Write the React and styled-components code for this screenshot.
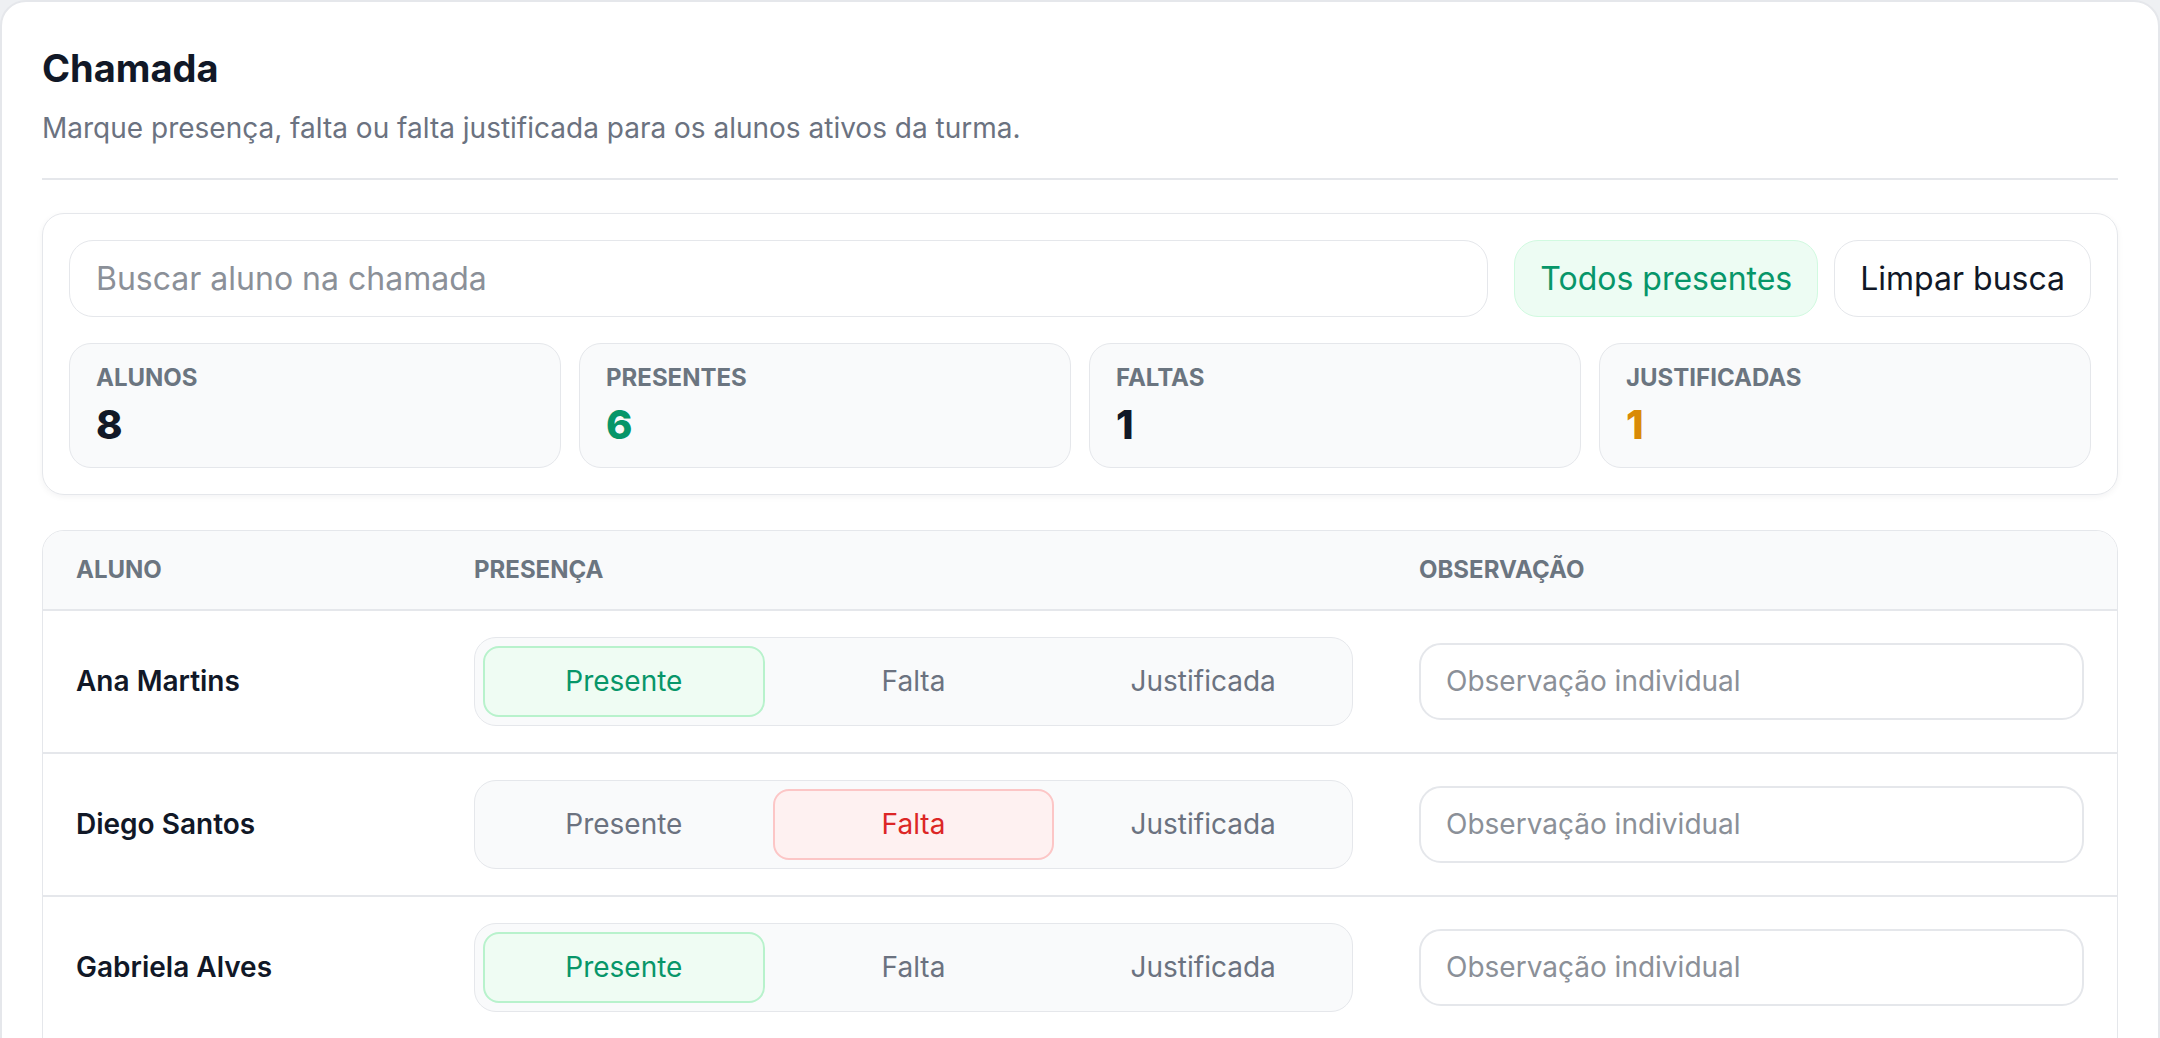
import React, { useState } from 'react'
import styled, { createGlobalStyle } from 'styled-components'

const GlobalStyle = createGlobalStyle`
  * { box-sizing: border-box; }
  body {
    margin: 0;
    background: #eef0f3;
    font-family: Inter, "Noto Sans", sans-serif;
    color: #111827;
  }
  input::placeholder { color: #8b9098; }
`

const Card = styled.section`
  background: #fff;
  border: 2px solid #e5e7eb;
  border-radius: 26px;
  padding: 44px 40px 60px;
`

const Title = styled.h1`
  margin: 0;
  font-size: 38px;
  font-weight: 700;
  line-height: 1.2;
  color: #111827;
`

const Subtitle = styled.p`
  margin: 18px 0 0;
  font-size: 28px;
  line-height: 1.3;
  color: #6b7280;
`

const Divider = styled.hr`
  margin: 32px 0 33px;
  border: 0;
  height: 2px;
  background: #e5e7eb;
`

const Panel = styled.div`
  border: 1px solid #e5e7eb;
  border-radius: 22px;
  padding: 26px;
  display: flex;
  flex-direction: column;
  gap: 26px;
  box-shadow: 0 2px 6px rgba(15, 23, 42, 0.05);
`

const Toolbar = styled.div`
  display: flex;
  align-items: center;
`

const Search = styled.input`
  flex: 1;
  height: 77px;
  border: 1px solid #e5e7eb;
  border-radius: 24px;
  padding: 0 26px;
  font-family: inherit;
  font-size: 32px;
  color: #111827;
  outline: none;
  margin-right: 26px;
`

const ToolButton = styled.button`
  height: 77px;
  padding: 0 25px;
  border-radius: 24px;
  font-family: inherit;
  font-size: 32px;
  cursor: pointer;
  border: 1px solid ${p => (p.$accent ? '#d1fae0' : '#e5e7eb')};
  background: ${p => (p.$accent ? '#edfcf3' : '#fff')};
  color: ${p => (p.$accent ? '#079669' : '#111827')};
  & + & { margin-left: 16px; }
`

const Stats = styled.div`
  display: grid;
  grid-template-columns: repeat(4, 1fr);
  gap: 18px;
`

const Stat = styled.div`
  height: 125px;
  border: 1px solid #e5e7eb;
  border-radius: 22px;
  background: #f9fafb;
  padding: 20px 26px;
  display: flex;
  flex-direction: column;
  gap: 8px;
`

const StatLabel = styled.span`
  font-size: 24px;
  font-weight: 700;
  line-height: 1.2;
  color: #6b7580;
  text-transform: uppercase;
`

const StatValue = styled.span`
  font-size: 40px;
  font-weight: 800;
  line-height: 1.2;
  color: ${p => p.$color || '#111827'};
`

const Table = styled.div`
  margin-top: 35px;
  border: 1px solid #e5e7eb;
  border-radius: 22px;
  overflow: hidden;
`

const Row = styled.div`
  display: grid;
  grid-template-columns: 398px 945px 1fr;
  align-items: center;
  height: ${p => (p.$head ? '80px' : '143px')};
  background: ${p => (p.$head ? '#f9fafb' : '#fff')};
  border-bottom: 2px solid #e5e7eb;
  &:last-child { border-bottom: 0; }
`

const Cell = styled.div`
  padding: 0 33px;
`

const HeadCell = styled(Cell)`
  font-size: 24px;
  font-weight: 700;
  color: #6b7580;
  text-transform: uppercase;
`

const Name = styled(Cell)`
  font-size: 28px;
  font-weight: 600;
  color: #111827;
`

const Segmented = styled.div`
  display: grid;
  grid-template-columns: repeat(3, 1fr);
  gap: 8px;
  height: 89px;
  padding: 8px;
  border: 1px solid #e5e7eb;
  border-radius: 22px;
  background: #f9fafb;
`

const tones = {
  presente: { bg: '#effcf3', border: '#b8f2cc', color: '#079669' },
  falta: { bg: '#fef1f1', border: '#fcc6c6', color: '#dc2626' },
  justificada: { bg: '#fffbeb', border: '#fde68a', color: '#d97706' },
}

const Segment = styled.button`
  border-radius: 16px;
  font-family: inherit;
  font-size: 28px;
  cursor: pointer;
  border: 2px solid ${p => (p.$active ? tones[p.$value].border : 'transparent')};
  background: ${p => (p.$active ? tones[p.$value].bg : 'transparent')};
  color: ${p => (p.$active ? tones[p.$value].color : '#6b7280')};
`

const Note = styled.input`
  width: 100%;
  height: 77px;
  border: 2px solid #e5e7eb;
  border-radius: 22px;
  padding: 0 25px;
  font-family: inherit;
  font-size: 28px;
  color: #111827;
  outline: none;
`

const options = [
  { value: 'presente', label: 'Presente' },
  { value: 'falta', label: 'Falta' },
  { value: 'justificada', label: 'Justificada' },
]

const initialStudents = [
  { id: 1, name: 'Ana Martins', status: 'presente' },
  { id: 2, name: 'Diego Santos', status: 'falta' },
  { id: 3, name: 'Gabriela Alves', status: 'presente' },
  { id: 4, name: 'Helena Costa', status: 'presente' },
  { id: 5, name: 'Lucas Pereira', status: 'justificada' },
  { id: 6, name: 'Marina Rocha', status: 'presente' },
  { id: 7, name: 'Pedro Lima', status: 'presente' },
  { id: 8, name: 'Rafael Souza', status: 'presente' },
]

export default function App() {
  const [students, setStudents] = useState(initialStudents)
  const [query, setQuery] = useState('')

  const setStatus = (id, status) =>
    setStudents(list => list.map(s => (s.id === id ? { ...s, status } : s)))

  const count = status => students.filter(s => s.status === status).length
  const visible = students.filter(s =>
    s.name.toLowerCase().includes(query.toLowerCase())
  )

  return (
    <>
      <GlobalStyle />
      <Card>
        <Title>Chamada</Title>
        <Subtitle>
          Marque presença, falta ou falta justificada para os alunos ativos da turma.
        </Subtitle>
        <Divider />

        <Panel>
          <Toolbar>
            <Search
              placeholder="Buscar aluno na chamada"
              value={query}
              onChange={e => setQuery(e.target.value)}
            />
            <ToolButton
              $accent
              onClick={() => setStudents(list => list.map(s => ({ ...s, status: 'presente' })))}
            >
              Todos presentes
            </ToolButton>
            <ToolButton onClick={() => setQuery('')}>Limpar busca</ToolButton>
          </Toolbar>
          <Stats>
            <Stat>
              <StatLabel>Alunos</StatLabel>
              <StatValue>{students.length}</StatValue>
            </Stat>
            <Stat>
              <StatLabel>Presentes</StatLabel>
              <StatValue $color="#079669">{count('presente')}</StatValue>
            </Stat>
            <Stat>
              <StatLabel>Faltas</StatLabel>
              <StatValue>{count('falta')}</StatValue>
            </Stat>
            <Stat>
              <StatLabel>Justificadas</StatLabel>
              <StatValue $color="#d98a06">{count('justificada')}</StatValue>
            </Stat>
          </Stats>
        </Panel>

        <Table>
          <Row $head>
            <HeadCell>Aluno</HeadCell>
            <HeadCell>Presença</HeadCell>
            <HeadCell>Observação</HeadCell>
          </Row>
          {visible.map(s => (
            <Row key={s.id}>
              <Name>{s.name}</Name>
              <Cell>
                <Segmented>
                  {options.map(o => (
                    <Segment
                      key={o.value}
                      $value={o.value}
                      $active={s.status === o.value}
                      onClick={() => setStatus(s.id, o.value)}
                    >
                      {o.label}
                    </Segment>
                  ))}
                </Segmented>
              </Cell>
              <Cell>
                <Note placeholder="Observação individual" />
              </Cell>
            </Row>
          ))}
        </Table>
      </Card>
    </>
  )
}
